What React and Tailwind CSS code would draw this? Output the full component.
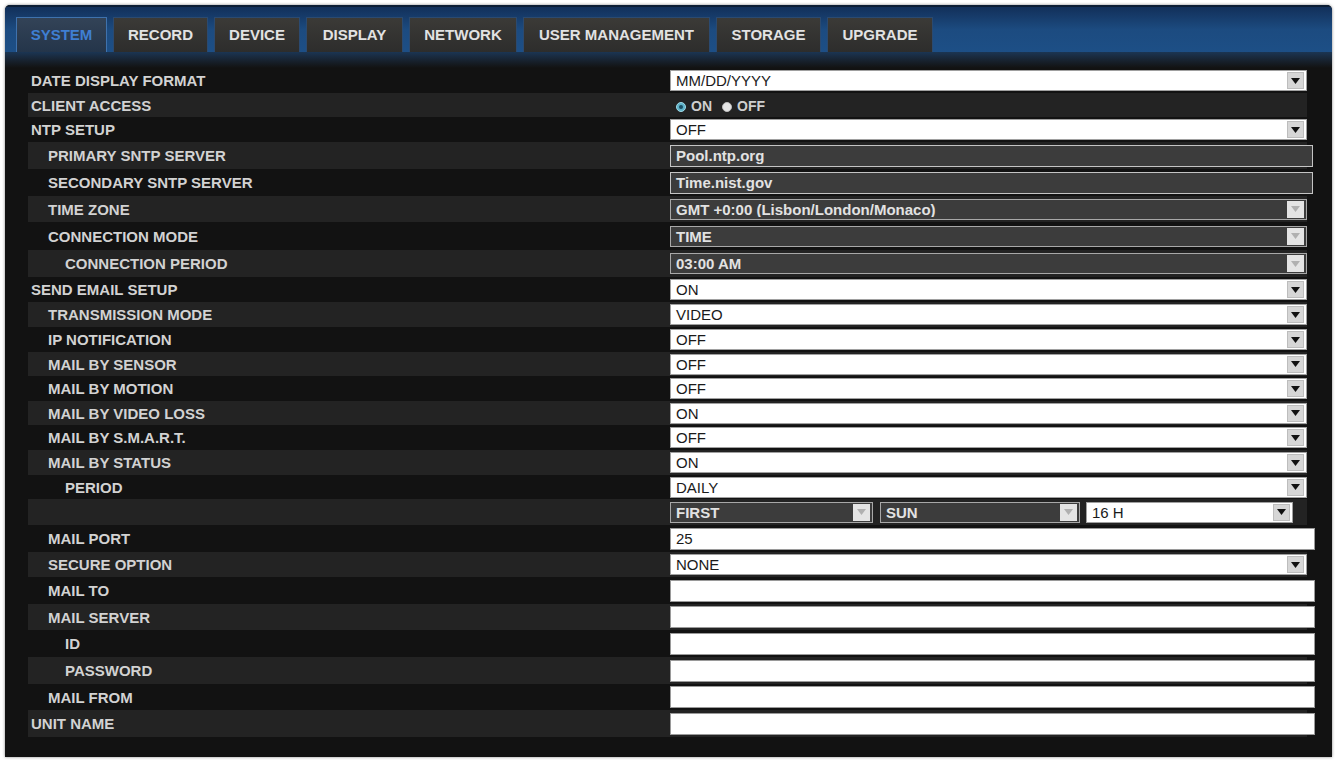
import React from 'react';

const tabs = [
  { name: 'SYSTEM', w: 'w-[91px]', active: true },
  { name: 'RECORD', w: 'w-[95px]' },
  { name: 'DEVICE', w: 'w-[86px]' },
  { name: 'DISPLAY', w: 'w-[97px]' },
  { name: 'NETWORK', w: 'w-[108px]' },
  { name: 'USER MANAGEMENT', w: 'w-[187px]' },
  { name: 'STORAGE', w: 'w-[105px]' },
  { name: 'UPGRADE', w: 'w-[106px]' },
];

// h = row height in px, lv = indent level
const rows = [
  { label: 'DATE DISPLAY FORMAT', lv: 0, h: 25, type: 'select', value: 'MM/DD/YYYY' },
  { label: 'CLIENT ACCESS', lv: 0, h: 24, type: 'radio' },
  { label: 'NTP SETUP', lv: 0, h: 25, type: 'select', value: 'OFF' },
  { label: 'PRIMARY SNTP SERVER', lv: 1, h: 27, type: 'text', value: 'Pool.ntp.org', disabled: true },
  { label: 'SECONDARY SNTP SERVER', lv: 1, h: 27, type: 'text', value: 'Time.nist.gov', disabled: true },
  { label: 'TIME ZONE', lv: 1, h: 26, type: 'select', value: 'GMT +0:00 (Lisbon/London/Monaco)', disabled: true },
  { label: 'CONNECTION MODE', lv: 1, h: 28, type: 'select', value: 'TIME', disabled: true },
  { label: 'CONNECTION PERIOD', lv: 2, h: 27, type: 'select', value: '03:00 AM', disabled: true },
  { label: 'SEND EMAIL SETUP', lv: 0, h: 25, type: 'select', value: 'ON' },
  { label: 'TRANSMISSION MODE', lv: 1, h: 25, type: 'select', value: 'VIDEO' },
  { label: 'IP NOTIFICATION', lv: 1, h: 25, type: 'select', value: 'OFF' },
  { label: 'MAIL BY SENSOR', lv: 1, h: 24, type: 'select', value: 'OFF' },
  { label: 'MAIL BY MOTION', lv: 1, h: 25, type: 'select', value: 'OFF' },
  { label: 'MAIL BY VIDEO LOSS', lv: 1, h: 24, type: 'select', value: 'ON' },
  { label: 'MAIL BY S.M.A.R.T.', lv: 1, h: 25, type: 'select', value: 'OFF' },
  { label: 'MAIL BY STATUS', lv: 1, h: 25, type: 'select', value: 'ON' },
  { label: 'PERIOD', lv: 2, h: 24, type: 'select', value: 'DAILY' },
  { label: '', lv: 0, h: 26, type: 'triple' },
  { label: 'MAIL PORT', lv: 1, h: 27, type: 'text', value: '25' },
  { label: 'SECURE OPTION', lv: 1, h: 25, type: 'select', value: 'NONE' },
  { label: 'MAIL TO', lv: 1, h: 27, type: 'text', value: '' },
  { label: 'MAIL SERVER', lv: 1, h: 26, type: 'text', value: '' },
  { label: 'ID', lv: 2, h: 27, type: 'text', value: '' },
  { label: 'PASSWORD', lv: 2, h: 27, type: 'text', value: '' },
  { label: 'MAIL FROM', lv: 1, h: 26, type: 'text', value: '' },
  { label: 'UNIT NAME', lv: 0, h: 27, type: 'text', value: '' },
];

const indent = ['pl-[3px]', 'pl-[20px]', 'pl-[37px]'];

function Arrow({ disabled }) {
  return (
    <div className={`w-[17px] h-[17px] mr-[2px] flex items-center justify-center ${disabled ? 'bg-[#e4e4e4]' : 'bg-[#d6d6d6] border border-[#bdbdbd]'}`}>
      <svg width="9" height="6" viewBox="0 0 9 6">
        <path d="M0 0 L9 0 L4.5 6 Z" fill={disabled ? '#b0b0b0' : '#111'} />
      </svg>
    </div>
  );
}

function Select({ value, disabled, className = 'w-full' }) {
  return (
    <div className={`${className} h-[21px] flex items-center border ${disabled ? 'bg-[#3c3c3c] border-[#a8a8a8] text-[#e2e2e2] font-bold' : 'bg-white border-[#a0a0a0] text-[#1a1a1a]'}`}>
      <span className="flex-1 pl-[5px] text-[15px] leading-none truncate">{value}</span>
      <Arrow disabled={disabled} />
    </div>
  );
}

function TextBox({ value, disabled }) {
  return (
    <div className={`h-[22px] flex items-center border ${disabled ? 'mr-[-6px] bg-[#3c3c3c] border-[#c4c4c4] text-[#e2e2e2] font-bold' : 'mr-[-8px] bg-white border-[#9a9a9a] text-[#1a1a1a]'}`}>
      <span className="pl-[5px] text-[15px] leading-none">{value}</span>
    </div>
  );
}

function Radio() {
  return (
    <div className="flex items-center h-[21px] pl-[6px] pt-[3px] text-[14px] font-bold text-[#cfcfcf]">
      <span className="w-[10px] h-[10px] rounded-full bg-[#5fb3c9] border border-[#9fd8e6] flex items-center justify-center">
        <span className="w-[4px] h-[4px] rounded-full bg-[#1b4f63]" />
      </span>
      <span className="ml-[5px]">ON</span>
      <span className="ml-[10px] w-[10px] h-[10px] rounded-full bg-[#e6e6e6] border border-[#bdbdbd]" />
      <span className="ml-[5px]">OFF</span>
    </div>
  );
}

function Field({ row }) {
  if (row.type === 'radio') return <Radio />;
  if (row.type === 'text') return <TextBox value={row.value} disabled={row.disabled} />;
  if (row.type === 'triple') {
    return (
      <div className="flex">
        <Select value="FIRST" disabled className="w-[203px]" />
        <Select value="SUN" disabled className="w-[200px] ml-[7px]" />
        <Select value="16 H" className="w-[207px] ml-[6px]" />
      </div>
    );
  }
  return <Select value={row.value} disabled={row.disabled} />;
}

export default function App() {
  return (
    <div className="w-full h-[762px] bg-white p-[5px]" style={{ fontFamily: '"Liberation Sans", Arial, sans-serif' }}>
      <div className="h-full flex flex-col bg-[#121212] rounded-t-[5px] overflow-hidden shadow-[0_0_3px_rgba(0,0,0,0.5)]">
        {/* Tab bar */}
        <div className="h-[47px] flex items-end gap-[6px] pl-[11px] bg-gradient-to-b from-[#12305a] via-[#1c4b80] to-[#1d4f86] border-t-[2px] border-[#0c1e35]">
          {tabs.map(t => (
            <div
              key={t.name}
              className={`${t.w} h-[35px] flex items-center justify-center text-[15px] font-bold border-x border-t ${t.active ? 'bg-gradient-to-b from-[#334357] to-[#24354a] text-[#3f7fd2] border-[#3f72ad]' : 'bg-gradient-to-b from-[#3b3a37] to-[#2d2d2c] text-[#e2e2e2] border-[#2b4a70]'}`}
            >
              {t.name}
            </div>
          ))}
        </div>
        <div className="h-[16px] bg-gradient-to-b from-[#1b3553] to-[#121212]" />

        {/* Settings rows */}
        <div className="pl-[23px] pr-[25px]">
          {rows.map((r, i) => (
            <div
              key={i}
              className={`flex items-center ${i % 2 ? 'bg-[#232323]' : 'bg-[#121212]'}`}
              style={{ height: r.h }}
            >
              <div className={`w-[642px] shrink-0 ${indent[r.lv]} text-[15px] font-bold text-[#d2d2d2] leading-none`}>
                {r.label}
              </div>
              <div className="flex-1">
                <Field row={r} />
              </div>
            </div>
          ))}
        </div>
      </div>
    </div>
  );
}
